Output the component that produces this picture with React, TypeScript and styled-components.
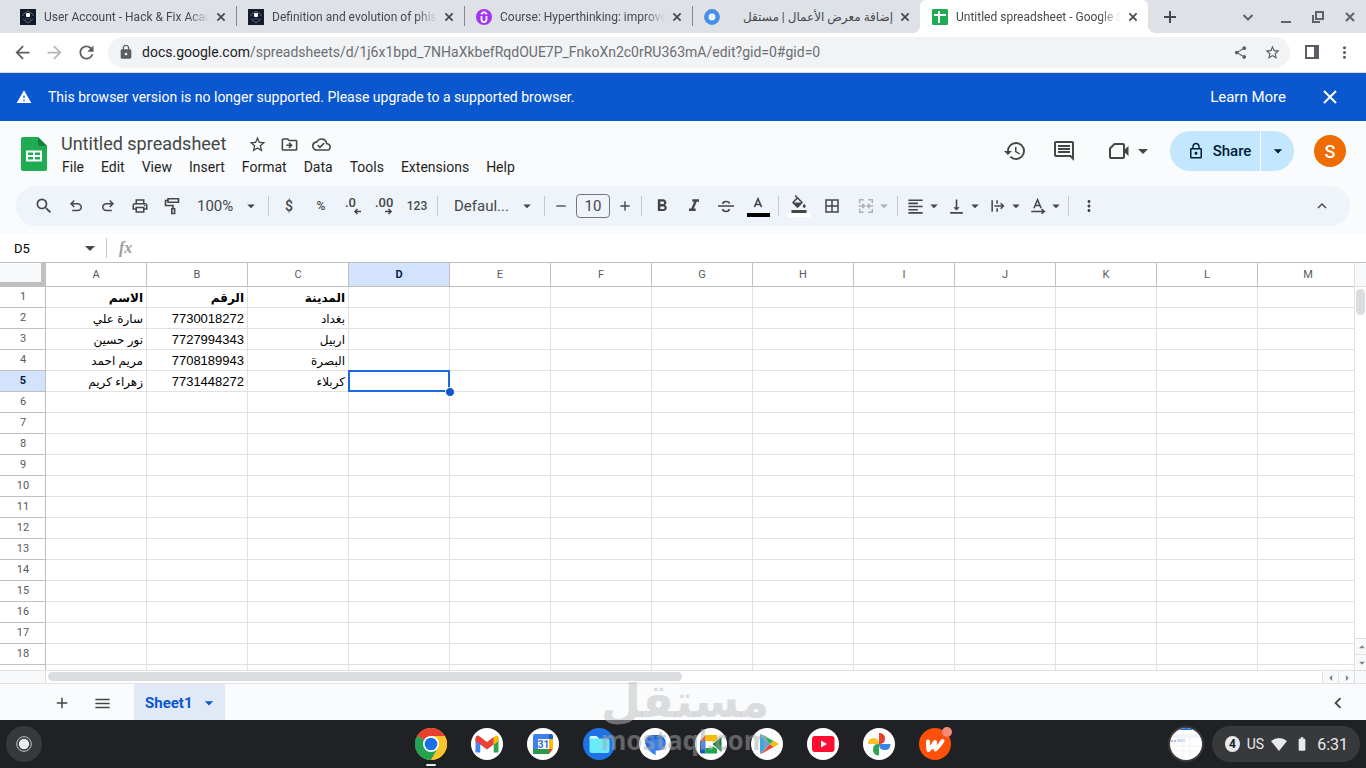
import React from "react";
import styled, { createGlobalStyle, css } from "styled-components";
import {
  MdAdd,
  MdArrowBack,
  MdArrowDropDown,
  MdArrowDropUp,
  MdArrowForward,
  MdArrowLeft,
  MdArrowRight,
  MdBatteryFull,
  MdBorderAll,
  MdChevronLeft,
  MdExpandLess,
  MdFormatAlignLeft,
  MdFormatBold,
  MdFormatColorFill,
  MdFormatItalic,
  MdHistory,
  MdLock,
  MdLockOutline,
  MdMenu,
  MdMoreVert,
  MdOutlineCloudDone,
  MdOutlineComment,
  MdOutlineDriveFileMove,
  MdOutlinePrint,
  MdRefresh,
  MdRemove,
  MdSearch,
  MdShare,
  MdStarBorder,
  MdVerticalAlignBottom,
  MdWarning,
} from "react-icons/md";

const GlobalStyle = createGlobalStyle`
  *, *::before, *::after { box-sizing: border-box; }
  body { margin: 0; font-family: Roboto, "DejaVu Sans", sans-serif; background: #fff; }
  button, input, select { font: inherit; color: inherit; margin: 0; padding: 0; border: 0; background: none; }
  button { cursor: pointer; }
  svg { display: block; flex: none; }
`;

const Screen = styled.div`
  position: relative;
  display: flex;
  flex-direction: column;
  height: 100vh;
  overflow: hidden;
`;

/* Browser chrome */

const TabStrip = styled.div`
  display: flex;
  flex: none;
  height: 33px;
  padding-left: 8px;
  background: #dee1e6;
  color: #45494d;
`;

const Tab = styled.div<{ $active?: boolean; $divided?: boolean }>`
  position: relative;
  display: flex;
  align-items: center;
  flex: 0 1 228px;
  min-width: 0;
  gap: 8px;
  padding: 0 7px 0 12px;
  font-size: 12px;
  ${(p) =>
    p.$divided &&
    css`
      &::after {
        content: "";
        position: absolute;
        right: -1px;
        top: 6px;
        width: 1px;
        height: 20px;
        background: #85898d;
      }
    `}
  ${(p) =>
    p.$active &&
    css`
      background: #fff;
      border-radius: 6px 6px 0 0;
      &::before,
      &::after {
        content: "";
        position: absolute;
        bottom: 0;
        width: 8px;
        height: 8px;
      }
      &::before {
        right: 100%;
        background: radial-gradient(circle at 0 0, transparent 8px, #fff 8px);
      }
      &::after {
        left: 100%;
        background: radial-gradient(circle at 100% 0, transparent 8px, #fff 8px);
      }
    `}
`;

const TabTitle = styled.span<{ $fade?: boolean }>`
  flex: 1;
  min-width: 0;
  overflow: hidden;
  white-space: nowrap;
  line-height: 20px;
  ${(p) => p.$fade && "mask-image: linear-gradient(to right, #000 144px, transparent 165px);"}
`;

const TabClose = styled.button`
  display: flex;
  margin-left: -4px;
`;

const NewTab = styled.button`
  display: grid;
  place-items: center;
  width: 44px;
`;

const WindowControls = styled.div`
  display: flex;
  align-items: center;
  margin-left: auto;
  color: #5f6368;
`;

const WindowButton = styled.button<{ $w?: number }>`
  display: grid;
  place-items: center;
  width: ${(p) => p.$w ?? 32}px;
  height: 32px;
`;

const AddressRow = styled.div`
  display: flex;
  align-items: center;
  flex: none;
  height: 40px;
  padding: 0 6px 1px;
  border-bottom: 1px solid #dadce0;
  color: #5a5e62;
`;

const ChromeButton = styled.button<{ $faint?: boolean }>`
  display: grid;
  place-items: center;
  width: 32px;
  height: 32px;
  opacity: ${(p) => (p.$faint ? 0.45 : 1)};
`;

const Omnibox = styled.div`
  display: flex;
  align-items: center;
  flex: 1;
  min-width: 0;
  height: 31px;
  margin: 0 6px;
  padding: 0 2px 0 10px;
  border-radius: 16px;
  background: #f1f3f4;
`;

const Url = styled.div`
  flex: 1;
  min-width: 0;
  margin-left: 8px;
  overflow: hidden;
  white-space: nowrap;
  font-size: 14px;
  line-height: 20px;
  color: #6b6e72;
  b { font-weight: 400; color: #202124; }
`;

const Banner = styled.div`
  display: flex;
  align-items: center;
  flex: none;
  height: 48px;
  padding: 0 20px 0 16px;
  background: #0b57d0;
  color: #fff;
  font-size: 14px;
  p { flex: 1; margin: 0 0 0 16px; }
  a { color: inherit; font-size: 15px; text-decoration: none; }
  button { display: grid; place-items: center; width: 32px; height: 32px; margin-left: 28px; }
`;

/* Document header */

const AppShell = styled.div`
  flex: none;
  padding-bottom: 8px;
  background: #f9fbfd;
  color: #444746;
`;

const DocHeader = styled.header`
  display: flex;
  height: 65px;
  padding: 0 20px 0 21px;
`;

const DocLogo = styled.a`
  margin: 16px 7px 0 0;
`;

const DocNames = styled.div`
  display: flex;
  flex-direction: column;
  padding-top: 12px;
`;

const TitleRow = styled.div`
  display: flex;
  align-items: center;
  height: 23px;
  margin-left: 7px;
`;

const TitleInput = styled.input`
  width: 180px;
  height: 24px;
  padding-bottom: 2px;
  font-size: 18px;
`;

const IconButton = styled.button<{ $w?: number; $shift?: number }>`
  display: flex;
  align-items: center;
  justify-content: center;
  width: ${(p) => p.$w ?? 32}px;
  height: 24px;
  padding-left: ${(p) => p.$shift ?? 0}px;
`;

const MenuBar = styled.nav`
  display: flex;
  gap: 1px;
  height: 22px;
  font-size: 14px;
  color: #1f1f1f;
  button { padding: 0 8px; }
`;

const DocActions = styled.div`
  display: flex;
  align-items: center;
  height: 40px;
  margin: 10px 0 0 auto;
`;

const ShareGroup = styled.div`
  display: flex;
  height: 40px;
  margin: 0 20px 0 14px;
  border-radius: 20px;
  overflow: hidden;
  background: #c2e7ff;
  color: #001d35;
  font-size: 15px;
  font-weight: 500;
  button { display: flex; align-items: center; justify-content: center; gap: 8px; }
  button:first-child { width: 91px; padding-left: 8px; border-right: 1px solid #fff; }
  button:last-child { width: 33px; }
`;

const Avatar = styled.button`
  width: 32px;
  height: 32px;
  border-radius: 50%;
  background: #ef6c00;
  color: #fff;
  font-size: 18px;
  font-weight: 500;
`;

/* Formatting toolbar */

const Toolbar = styled.div`
  display: flex;
  align-items: center;
  height: 40px;
  margin: 0 16px;
  padding: 0 12px 0 11px;
  border-radius: 20px;
  background: #eff3fa;
  font-size: 14px;
`;

const Tool = styled.button<{ $w?: number; $shift?: number; $disabled?: boolean; $push?: boolean }>`
  display: flex;
  align-items: center;
  justify-content: center;
  flex: none;
  width: ${(p) => p.$w ?? 32}px;
  height: 28px;
  margin-left: ${(p) => (p.$push ? "auto" : 0)};
  padding-left: ${(p) => p.$shift ?? 0}px;
  font-weight: 500;
  opacity: ${(p) => (p.$disabled ? 0.38 : 1)};
`;

const SmallLabel = styled.span`
  font-size: 12px;
`;

const Separator = styled.span`
  flex: none;
  width: 1px;
  height: 20px;
  margin: 0 4px;
  background: #c7c7c7;
`;

const SelectBox = styled.label<{ $w: number; $inset: number }>`
  display: grid;
  grid-template-columns: 1fr 22px;
  align-items: center;
  flex: none;
  width: ${(p) => p.$w}px;
  padding-left: ${(p) => p.$inset}px;
  select {
    grid-area: 1 / 1 / 2 / 3;
    width: 100%;
    height: 24px;
    appearance: none;
    outline: 0;
    font-size: 15px;
  }
  svg { grid-area: 1 / 2; pointer-events: none; }
`;

const SizeInput = styled.input`
  flex: none;
  width: 34px;
  height: 24px;
  margin: 0 3px;
  border: 1px solid #747775;
  border-radius: 4px;
  text-align: center;
  font-size: 15px;
`;

const ColorTool = styled(Tool)<{ $bar: string }>`
  flex-direction: column;
  &::after {
    content: "";
    width: 23px;
    height: 4px;
    background: ${(p) => p.$bar};
  }
`;

/* Formula bar */

const FormulaBar = styled.div`
  display: flex;
  align-items: center;
  flex: none;
  height: 29px;
  padding: 0 8px 0 14px;
  border-bottom: 1px solid #c0c0c0;
  color: #444746;
`;

const NameBox = styled.input`
  width: 64px;
  height: 20px;
  font-size: 13px;
  color: #000;
`;

const FxMark = styled.span`
  width: 20px;
  margin-left: 8px;
  font: italic 700 16px/20px "Liberation Serif", serif;
  color: #9a9ea3;
`;

const FormulaInput = styled.input`
  flex: 1;
  height: 20px;
`;

/* Grid */

const GridRow = styled.div`
  display: flex;
  flex: 1;
  min-height: 0;
`;

const GridView = styled.div`
  flex: 1;
  min-width: 0;
  overflow: hidden;
`;

const Sheet = styled.table`
  width: max-content;
  table-layout: fixed;
  border-collapse: separate;
  border-spacing: 0;
  th, td { padding: 0; }
`;

const CornerCell = styled.th`
  width: 46px;
  height: 24px;
  border: solid #c0c0c0;
  border-width: 0 5px 5px 0;
  background: #f8f9fa;
`;

const headCell = css<{ $on?: boolean }>`
  border: solid #c0c0c0;
  border-width: 0 1px 1px 0;
  font-size: 11px;
  line-height: 14px;
  font-weight: ${(p) => (p.$on ? 700 : 400)};
  color: ${(p) => (p.$on ? "#041e49" : "#575a5a")};
  background: ${(p) => (p.$on ? "#d3e3fd" : "#fff")};
`;

const ColumnHead = styled.th<{ $on?: boolean }>`
  ${headCell}
  width: 101px;
  height: 24px;
`;

const RowHead = styled.th<{ $on?: boolean }>`
  ${headCell}
  width: 46px;
  height: 21px;
  text-indent: 1px;
`;

const Cell = styled.td<{ $bold?: boolean; $arabic?: boolean }>`
  position: relative;
  height: 21px;
  border: solid #e1e1e1;
  border-width: 0 1px 1px 0;
  font-family: "Liberation Sans", "DejaVu Sans", sans-serif;
  font-size: ${(p) => (p.$arabic ? 12 : 13)}px;
  font-weight: ${(p) => (p.$bold ? 700 : 400)};
  line-height: 16px;
  text-align: right;
  white-space: nowrap;
  color: #000;
  span { display: block; height: 18px; padding: 2px 3px 0 0; }
`;

const Selection = styled.i`
  position: absolute;
  z-index: 1;
  inset: -1px -1px -1px -1px;
  border: 2px solid #1a6be0;
  &::after {
    content: "";
    position: absolute;
    right: -7px;
    bottom: -7px;
    width: 10px;
    height: 10px;
    border: 1px solid #fff;
    border-radius: 50%;
    background: #0b57d0;
  }
`;

const VerticalTrack = styled.div`
  display: flex;
  flex-direction: column;
  width: 12px;
  border-left: 1px solid #e1e1e1;
  background: #fff;
`;

const TrackHead = styled.div`
  height: 24px;
  border-bottom: 1px solid #e1e1e1;
  background: #f8f9fa;
`;

const Thumb = styled.div<{ $vertical?: boolean }>`
  border-radius: 5px;
  background: #dadce0;
  ${(p) => (p.$vertical ? "height: 26px; margin: 2px 1px auto;" : "width: 46.4%; height: 9px; margin: 0 auto 2px 2px;")}
`;

const Stepper = styled.button<{ $vertical?: boolean }>`
  display: grid;
  place-items: center;
  flex: none;
  overflow: hidden;
  background: #f8f9fa;
  color: #80868b;
  ${(p) =>
    p.$vertical
      ? "width: 11px; height: 16px; border-top: 1px solid #e1e1e1;"
      : "width: 16px; height: 12px; border-left: 1px solid #e1e1e1;"}
`;

const HorizontalTrack = styled.div`
  display: flex;
  align-items: center;
  flex: none;
  height: 14px;
  border: solid #e1e1e1;
  border-width: 1px 0;
`;

const TrackCorner = styled.div<{ $w: number; $end?: boolean }>`
  width: ${(p) => p.$w}px;
  height: 12px;
  border: solid #dadce0;
  border-width: ${(p) => (p.$end ? "0 0 0 1px" : "0 1px 0 0")};
  background: #f8f9fa;
`;

const SheetBar = styled.div`
  display: flex;
  align-items: center;
  flex: none;
  height: 36px;
  padding: 0 8px 0 42px;
  background: #f9fbfd;
  color: #444746;
`;

const BarButton = styled.button`
  display: grid;
  place-items: center;
  width: 40px;
  height: 36px;
  padding-top: 2px;
`;

const SheetTab = styled.button`
  display: flex;
  align-items: center;
  justify-content: space-between;
  width: 91px;
  height: 36px;
  margin: 0 auto 0 12px;
  padding: 2px 6px 0 11px;
  background: #e1e9f7;
  color: #0b57d0;
  font-size: 15px;
  font-weight: 700;
`;

/* Shelf */

const Shelf = styled.footer`
  display: grid;
  grid-template-columns: 1fr auto 1fr;
  align-items: center;
  flex: none;
  height: 48px;
  padding: 0 6px;
  background: #202124;
`;

const Launcher = styled.button`
  display: grid;
  place-items: center;
  width: 36px;
  height: 36px;
  border-radius: 50%;
  background: #38393b;
`;

const AppRow = styled.div`
  display: flex;
  gap: 24px;
`;

const AppButton = styled.button<{ $running?: boolean }>`
  position: relative;
  width: 32px;
  height: 32px;
  ${(p) =>
    p.$running &&
    css`
      &::after {
        content: "";
        position: absolute;
        left: 11px;
        top: 36px;
        width: 10px;
        height: 2px;
        border-radius: 1px;
        background: #e8eaed;
      }
    `}
`;

const Tray = styled.div`
  display: flex;
  align-items: center;
  justify-content: flex-end;
  gap: 8px;
`;

const Holding = styled.button`
  width: 36px;
  height: 36px;
`;

const StatusPill = styled.button`
  display: flex;
  align-items: center;
  gap: 7px;
  width: 148px;
  height: 36px;
  padding: 0 12px 0 13px;
  border-radius: 18px;
  background: #38393b;
  color: #e8eaed;
  font-size: 14px;
  b { width: 16px; height: 16px; border-radius: 50%; background: #e8eaed; color: #202124; font-size: 12px; line-height: 16px; }
  time { font-size: 16px; }
`;

const Watermark = styled.div`
  position: absolute;
  left: 50%;
  bottom: 14px;
  width: 164px;
  margin-left: -82px;
  text-align: center;
  color: rgba(165, 165, 165, 0.5);
  font: 700 26px/28px "Noto Sans", sans-serif;
  pointer-events: none;
  strong { display: block; font: 700 46px/50px "DejaVu Sans", sans-serif; color: rgba(190, 190, 190, 0.5); }
`;

/* Icons */

const Caret = ({ size = 18 }: { size?: number }) => <MdArrowDropDown size={size} />;

const Symbol = ({ d, size = 18 }: { d: string; size?: number }) => (
  <svg width={size} height={size} viewBox="0 -960 960 960" fill="currentColor">
    <path d={d} />
  </svg>
);

const Line = ({ d, size = 20, w = 2 }: { d: string; size?: number; w?: number }) => (
  <svg width={size} height={size} viewBox="0 0 20 20" fill="none" stroke="currentColor" strokeWidth={w}>
    <path d={d} />
  </svg>
);

const UNDO =
  "M280-200v-80h284q63 0 109.5-40T720-420q0-60-46.5-100T564-560H312l104 104-56 56-200-200 200-200 56 56-104 104h252q97 0 163.5 63T800-420q0 94-66.5 157T564-200H280Z";
const REDO =
  "M396-200q-97 0-163.5-63T160-420q0-94 66.5-157T396-640h252L544-744l56-56 200 200-200 200-56-56 104-104H396q-63 0-109.5 40T240-420q0 60 46.5 100T396-280h284v80H396Z";

const AcademyIcon = () => (
  <svg width="16" height="16" viewBox="0 0 16 16">
    <rect width="16" height="16" fill="#111c30" />
    <path d="M3 5.500 8 2l5 3.500M3 10l5 4 5-4M3 5.500V7M13 5.500V7" fill="none" stroke="#6b6258" strokeWidth="1" />
    <rect x="6" y="4" width="4" height="4" rx="1" fill="#fff" />
    <path d="M5 10h6" stroke="#39445a" />
  </svg>
);

const CourseIcon = () => (
  <svg width="16" height="16" viewBox="0 0 16 16">
    <circle cx="8" cy="8" r="8" fill="#a435f0" />
    <path d="M5.500 7v3.500a2.500 2.500 0 0 0 5 0V7M5 5l3-2 3 2" fill="none" stroke="#fff" strokeWidth="1.800" />
  </svg>
);

const RingIcon = () => (
  <svg width="16" height="16" viewBox="0 0 16 16">
    <circle cx="8" cy="8" r="5.700" fill="#e6f1fc" stroke="#458fe6" strokeWidth="4.500" />
  </svg>
);

const SheetsFavicon = () => (
  <svg width="16" height="16" viewBox="0 0 16 16">
    <rect width="16" height="16" rx="1" fill="#1fab51" />
    <path d="M2 6h12M7 2v12" stroke="#fff" strokeWidth="2" />
  </svg>
);

const SheetsLogo = () => (
  <svg width="26" height="34" viewBox="0 0 26 34">
    <path d="M2 0h15l9 9v23a2 2 0 0 1-2 2H2a2 2 0 0 1-2-2V2a2 2 0 0 1 2-2z" fill="#1fab51" />
    <path d="M17 0l9 9h-7a2 2 0 0 1-2-2z" fill="#14803b" />
    <path d="M6 14.500h14v9H6zM13 14v10M6 19h14" fill="none" stroke="#fff" strokeWidth="2" />
  </svg>
);

const MeetGlyph = () => (
  <svg width="24" height="24" viewBox="0 0 24 24" fill="none" stroke="currentColor" strokeWidth="2">
    <path d="M7.500 5H16a1 1 0 0 1 1 1v12a1 1 0 0 1-1 1H4a1 1 0 0 1-1-1V9.500z" />
    <path d="M17 11l4.500-4v10L17 13z" fill="currentColor" stroke="none" />
  </svg>
);

const PaintRoller = () => (
  <svg width="18" height="18" viewBox="0 0 18 18" fill="none" stroke="currentColor" strokeWidth="1.600">
    <path d="M5 1.800h10.500v3.500H5zM5 3.500H2.500V8.500H10v3M8.800 11.800h2.800v4.700H8.800z" />
  </svg>
);

const Decimals = ({ text, right }: { text: string; right?: boolean }) => (
  <svg width="22" height="20" viewBox="0 0 22 20" fill="currentColor">
    <text x={right ? 1 : 3} y="11" fontFamily="Roboto" fontSize="13" fontWeight="500">
      {text}
    </text>
    <path
      d={right ? "M11 15.500h6M14.500 13 17 15.500l-2.500 2.500" : "M13 15.500h6M15.500 13 13 15.500l2.500 2.500"}
      fill="none"
      stroke="currentColor"
      strokeWidth="1.600"
    />
  </svg>
);

const Disc = ({ fill = "#fff", children }: { fill?: string; children?: React.ReactNode }) => (
  <svg width="32" height="32" viewBox="0 0 32 32">
    <circle cx="16" cy="16" r="16" fill={fill} />
    {children}
  </svg>
);

const apps: { name: string; running?: boolean; icon: React.ReactNode }[] = [
  {
    name: "Chrome",
    running: true,
    icon: (
      <Disc fill="#fbc02d">
        <path d="M16 16 2.140 8A16 16 0 0 1 29.860 8z" fill="#e8402f" />
        <path d="M2.140 8A16 16 0 0 0 16 32l7-12-7-4z" fill="#21a352" />
        <path d="M16 32a16 16 0 0 0 13.860-24H16l7 12z" fill="#fac52c" />
        <circle cx="16" cy="16" r="8" fill="#fff" />
        <circle cx="16" cy="16" r="6.300" fill="#1a6fe3" />
      </Disc>
    ),
  },
  {
    name: "Gmail",
    icon: (
      <Disc>
        <path d="M4.500 10v14.500h4.800V13z" fill="#4285f4" />
        <path d="M27.500 10v14.500h-4.800V13z" fill="#2da34f" />
        <path d="M22.700 9.500l2.300-2q2.500-.5 2.500 2.500v3l-4.800 4z" fill="#fbbc04" />
        <path d="M4.500 13v-3q0-3 3-2.500L16 14l6.700-5v7.500L16 21.500z" fill="#ea4335" />
      </Disc>
    ),
  },
  {
    name: "Calendar",
    icon: (
      <Disc>
        <path d="M6 8q0-2 2-2h14v20H6z" fill="#3f80ec" />
        <path d="M22 6h2q2 0 2 2v3h-4z" fill="#1b5fc9" />
        <path d="M22 11h4v10h-4z" fill="#fbbc04" />
        <path d="M22 21h4l-4 5z" fill="#ea4335" />
        <path d="M6 21h16v5H8q-2 0-2-2z" fill="#2a9a48" />
        <path d="M11 11h11v10H11z" fill="#fff" />
        <text x="16.500" y="20" textAnchor="middle" fontFamily="Roboto" fontWeight="700" fontSize="10" fill="#2a70e0">
          31
        </text>
      </Disc>
    ),
  },
  {
    name: "Files",
    icon: (
      <Disc fill="#1f72e5">
        <path d="M6.500 10q0-2 2-2h5l2.500 2.500h8.500q2 0 2 2V23q0 2-2 2h-16q-2 0-2-2z" fill="#6beaf8" />
        <path d="M6.500 10q0-2 2-2h5l2.500 2.500H6.500z" fill="#d9fbff" />
      </Disc>
    ),
  },
  {
    name: "Messages",
    icon: (
      <Disc>
        <path d="M13 7h6a7.500 7.500 0 0 1 0 15.500h-2.500V27q-8-4-10.500-12A7 7 0 0 1 13 7z" fill="#1a66d9" />
        <path d="M12 11h9a5.500 5.500 0 0 1 0 11h-4.500v5Q12 24.500 9 20z" fill="#4b91f2" opacity="0.600" />
      </Disc>
    ),
  },
  {
    name: "Meet",
    icon: (
      <Disc>
        <path d="M5 13h5.500v7H5z" fill="#2a72e8" />
        <path d="M10.500 7v6H5z" fill="#ea4335" />
        <path d="M10.500 7H22v4.500l-4.500 3V13h-7z" fill="#fbbc04" />
        <path d="M5 20h5.500v5.500H6.500Q5 25.500 5 24z" fill="#1558c8" />
        <path d="M10.500 20h7v-2l4.500 3v4.500H10.500z" fill="#1ea54c" />
        <path d="M17.500 16l9-7v15z" fill="#128038" />
      </Disc>
    ),
  },
  {
    name: "Play Store",
    icon: (
      <Disc>
        <path d="M9 6v20l10-10z" fill="#3fa3ee" />
        <path d="M9 5.500l13.500 7.500L19 16z" fill="#28b05c" />
        <path d="M9 26.500L22.500 19 19 16z" fill="#ea4335" />
        <path d="M22.500 12.800L28 16l-5.500 3.200L19 16z" fill="#fbbc04" />
      </Disc>
    ),
  },
  {
    name: "YouTube",
    icon: (
      <Disc>
        <rect x="5" y="8" width="22.500" height="16" rx="3" fill="#fb0e32" />
        <path d="M14 12.500v7l6-3.500z" fill="#fff" />
      </Disc>
    ),
  },
  {
    name: "Photos",
    icon: (
      <Disc>
        <path d="M16 16V5q6 0 6 5.500T16 16z" fill="#e8402f" />
        <path d="M16 16h11.500q0 6-5.800 6T16 16z" fill="#3f82ea" />
        <path d="M16 16v11.500q-6 0-6-6T16 16z" fill="#2da652" />
        <path d="M16 16H5q0-6 5.500-6T16 16z" fill="#fac02a" />
      </Disc>
    ),
  },
  {
    name: "Wattpad",
    icon: (
      <svg width="32" height="32" viewBox="0 0 32 32" overflow="visible">
        <circle cx="16" cy="16" r="16" fill="#fd500b" />
        <path
          d="M9 13.500q0 5 .5 8.500 4-3 6.500-8-.5 4 .5 7.500 3.500-3 7-8.500"
          fill="none"
          stroke="#fff"
          strokeWidth="4"
          strokeLinecap="round"
          strokeLinejoin="round"
        />
        <circle cx="28" cy="4" r="5" fill="#f48d78" />
      </svg>
    ),
  },
];

/* Data */

const columns = "ABCDEFGHIJKLM".split("");

const rows: string[][] = [
  ["الاسم", "الرقم", "المدينة"],
  ["سارة علي", "7730018272", "بغداد"],
  ["نور حسين", "7727994343", "اربيل"],
  ["مريم احمد", "7708189943", "البصرة"],
  ["زهراء كريم", "7731448272", "كربلاء"],
];

const isArabic = (text?: string) => /[\u0600-\u06ff]/.test(text ?? "");

const rowLabels = [...Array.from({ length: 18 }, (_, i) => String(i + 1)), ""];

const tabs = [
  { title: "User Account - Hack & Fix Academy", icon: <AcademyIcon />, divided: true },
  { title: "Definition and evolution of phishing", icon: <AcademyIcon />, divided: true },
  { title: "Course: Hyperthinking: improve your", icon: <CourseIcon />, divided: true },
  { title: "إضافة معرض الأعمال | مستقل", icon: <RingIcon />, rtl: true },
  { title: "Untitled spreadsheet - Google Sheets", icon: <SheetsFavicon />, active: true },
];

const menus = ["File", "Edit", "View", "Insert", "Format", "Data", "Tools", "Extensions", "Help"];

function BrowserChrome() {
  return (
    <>
      <TabStrip role="tablist">
        {tabs.map((t) => (
          <Tab key={t.title} role="tab" aria-selected={!!t.active} $active={t.active} $divided={t.divided}>
            {t.icon}
            <TabTitle $fade={!t.rtl} dir={t.rtl ? "rtl" : "ltr"}>
              {t.title}
            </TabTitle>
            <TabClose aria-label="Close tab">
              <Line d="M5.500 5.500l9 9M14.500 5.500l-9 9" w={2.2} size={16} />
            </TabClose>
          </Tab>
        ))}
        <NewTab aria-label="New tab">
          <Line d="M10 4v12M4 10h12" />
        </NewTab>
        <WindowControls>
          <WindowButton $w={44} aria-label="Search tabs">
            <Line d="M5.500 8l4.500 4.500L14.500 8" />
          </WindowButton>
          <WindowButton aria-label="Minimize">
            <Line d="M5 15h10" />
          </WindowButton>
          <WindowButton aria-label="Restore">
            <Line d="M8 5h7v7H8zM5 8v7h7" />
          </WindowButton>
          <WindowButton aria-label="Close window">
            <Line d="M6 6l8 8M14 6l-8 8" />
          </WindowButton>
        </WindowControls>
      </TabStrip>
      <AddressRow>
        <ChromeButton aria-label="Back">
          <MdArrowBack size={21} />
        </ChromeButton>
        <ChromeButton aria-label="Forward" $faint>
          <MdArrowForward size={21} />
        </ChromeButton>
        <ChromeButton aria-label="Reload">
          <MdRefresh size={21} />
        </ChromeButton>
        <Omnibox>
          <MdLock size={16} />
          <Url role="textbox" tabIndex={0} aria-label="Address">
            <b>docs.google.com</b>/spreadsheets/d/1j6x1bpd_7NHaXkbefRqdOUE7P_FnkoXn2c0rRU363mA/edit?gid=0#gid=0
          </Url>
          <ChromeButton aria-label="Share page">
            <MdShare size={15} />
          </ChromeButton>
          <ChromeButton aria-label="Bookmark">
            <MdStarBorder size={17} />
          </ChromeButton>
        </Omnibox>
        <ChromeButton aria-label="Side panel">
          <svg width="14" height="14" viewBox="0 0 14 14">
            <path d="M1 1h12v12H1z" fill="none" stroke="currentColor" strokeWidth="2" />
            <path d="M9 0h5v14H9z" fill="currentColor" />
          </svg>
        </ChromeButton>
        <ChromeButton aria-label="Browser menu">
          <MdMoreVert size={19} />
        </ChromeButton>
      </AddressRow>
    </>
  );
}

function FormatToolbar() {
  return (
    <Toolbar role="toolbar">
      <Tool $w={33} aria-label="Search the menus"><MdSearch size={20} /></Tool>
      <Tool aria-label="Undo"><Symbol d={UNDO} /></Tool>
      <Tool aria-label="Redo"><Symbol d={REDO} /></Tool>
      <Tool aria-label="Print"><MdOutlinePrint size={18} /></Tool>
      <Tool aria-label="Paint format"><PaintRoller /></Tool>
      <SelectBox $w={76} $inset={9}>
        <select aria-label="Zoom"><option>100%</option></select>
        <Caret />
      </SelectBox>
      <Separator />
      <Tool aria-label="Format as currency">$</Tool>
      <Tool aria-label="Format as percent"><SmallLabel>%</SmallLabel></Tool>
      <Tool aria-label="Decrease decimal places"><Decimals text=".0" /></Tool>
      <Tool aria-label="Increase decimal places"><Decimals text=".00" right /></Tool>
      <Tool aria-label="More formats"><SmallLabel>123</SmallLabel></Tool>
      <Separator />
      <SelectBox $w={98} $inset={12}>
        <select aria-label="Font"><option>Defaul...</option></select>
        <Caret />
      </SelectBox>
      <Separator />
      <Tool $w={24} aria-label="Decrease font size"><MdRemove size={16} /></Tool>
      <SizeInput defaultValue="10" aria-label="Font size" />
      <Tool $w={24} aria-label="Increase font size"><MdAdd size={16} /></Tool>
      <Separator />
      <Tool aria-label="Bold"><MdFormatBold size={20} /></Tool>
      <Tool aria-label="Italic"><MdFormatItalic size={20} /></Tool>
      <Tool aria-label="Strikethrough">
        <Line d="M2 10h16M13.500 7.500Q13 5.500 10 5.500T6.700 7.800M6.700 13Q7 15.500 10 15.500T13.300 13" w={1.7} />
      </Tool>
      <ColorTool $bar="#000" aria-label="Text color">
        <Line d="M6 13.500 10 4l4 9.500M7.500 10.500h5" w={1.7} size={18} />
      </ColorTool>
      <Separator />
      <ColorTool $bar="#fff" aria-label="Fill color"><MdFormatColorFill size={18} /></ColorTool>
      <Tool $w={34} aria-label="Borders"><MdBorderAll size={18} /></Tool>
      <Tool $w={44} $shift={8} $disabled aria-label="Merge cells">
        <Line
          d="M7.500 3H3v4M12.500 3H17v4M7.500 17H3v-4M12.500 17H17v-4M2 10h6M6 7.500 8.500 10 6 12.500M18 10h-6M14 7.500 11.500 10 14 12.500"
          w={1.6}
          size={18}
        />
        <Caret />
      </Tool>
      <Separator />
      <Tool $w={41} $shift={4} aria-label="Horizontal align"><MdFormatAlignLeft size={19} /><Caret /></Tool>
      <Tool $w={41} $shift={4} aria-label="Vertical align"><MdVerticalAlignBottom size={19} /><Caret /></Tool>
      <Tool $w={41} $shift={4} aria-label="Text wrapping">
        <Line d="M3.500 3.500v13M9 3.500v4M9 12.500v4M6 10h10M13 7l3 3-3 3" w={1.7} size={18} />
        <Caret />
      </Tool>
      <Tool $w={39} $shift={4} aria-label="Text rotation">
        <Line d="M5.500 12.500 9.500 3l4 9.500M7 9.500h5M2.500 16H16M14 13.500l3 2.500-3 2.500" w={1.7} size={18} />
        <Caret />
      </Tool>
      <Separator />
      <Tool aria-label="More"><MdMoreVert size={18} /></Tool>
      <Tool $push aria-label="Hide the menus"><MdExpandLess size={18} /></Tool>
    </Toolbar>
  );
}

function Grid() {
  return (
    <>
      <GridRow>
        <GridView>
          <Sheet>
            <thead>
              <tr>
                <CornerCell />
                {columns.map((c) => (
                  <ColumnHead key={c} scope="col" $on={c === "D"}>{c}</ColumnHead>
                ))}
              </tr>
            </thead>
            <tbody>
              {rowLabels.map((label, r) => (
                <tr key={r}>
                  <RowHead scope="row" $on={label === "5"}>{label}</RowHead>
                  {columns.map((c, i) => (
                    <Cell key={c} $bold={r === 0} $arabic={isArabic(rows[r]?.[i])}>
                      {rows[r]?.[i] && <span>{rows[r][i]}</span>}
                      {r === 4 && c === "D" && <Selection />}
                    </Cell>
                  ))}
                </tr>
              ))}
            </tbody>
          </Sheet>
        </GridView>
        <VerticalTrack>
          <TrackHead />
          <Thumb $vertical />
          <Stepper $vertical aria-label="Scroll up"><MdArrowDropUp size={14} /></Stepper>
          <Stepper $vertical aria-label="Scroll down"><MdArrowDropDown size={14} /></Stepper>
        </VerticalTrack>
      </GridRow>
      <HorizontalTrack>
        <TrackCorner $w={46} />
        <Thumb />
        <Stepper aria-label="Scroll left"><MdArrowLeft size={14} /></Stepper>
        <Stepper aria-label="Scroll right"><MdArrowRight size={14} /></Stepper>
        <TrackCorner $w={12} $end />
      </HorizontalTrack>
    </>
  );
}

export default function App() {
  return (
    <Screen>
      <GlobalStyle />
      <BrowserChrome />
      <Banner role="alert">
        <MdWarning size={16} />
        <p>This browser version is no longer supported. Please upgrade to a supported browser.</p>
        <a href="#learn">Learn More</a>
        <button aria-label="Dismiss"><Line d="M4 4l12 12M16 4L4 16" w={2} /></button>
      </Banner>

      <AppShell>
        <DocHeader>
          <DocLogo href="#home" aria-label="Sheets home"><SheetsLogo /></DocLogo>
          <DocNames>
            <TitleRow>
              <TitleInput defaultValue="Untitled spreadsheet" aria-label="Document name" />
              <IconButton aria-label="Star"><MdStarBorder size={19} /></IconButton>
              <IconButton aria-label="Move"><MdOutlineDriveFileMove size={19} /></IconButton>
              <IconButton aria-label="Saved to Drive"><MdOutlineCloudDone size={19} /></IconButton>
            </TitleRow>
            <MenuBar>
              {menus.map((m) => (
                <button key={m}>{m}</button>
              ))}
            </MenuBar>
          </DocNames>
          <DocActions>
            <IconButton $w={49} aria-label="Version history"><MdHistory size={24} /></IconButton>
            <IconButton $w={49} aria-label="Comments"><MdOutlineComment size={24} /></IconButton>
            <IconButton $w={68} $shift={18} aria-label="Meet"><MeetGlyph /><Caret size={24} /></IconButton>
            <ShareGroup>
              <button><MdLockOutline size={18} />Share</button>
              <button aria-label="Share options"><Caret size={20} /></button>
            </ShareGroup>
            <Avatar aria-label="Account">S</Avatar>
          </DocActions>
        </DocHeader>
        <FormatToolbar />
      </AppShell>

      <FormulaBar>
        <NameBox defaultValue="D5" aria-label="Name box" />
        <Caret size={24} />
        <Separator />
        <FxMark aria-hidden="true">fx</FxMark>
        <FormulaInput aria-label="Formula" />
      </FormulaBar>

      <Grid />

      <SheetBar>
        <BarButton aria-label="Add sheet"><MdAdd size={18} /></BarButton>
        <BarButton aria-label="All sheets"><MdMenu size={19} /></BarButton>
        <SheetTab>Sheet1<Caret size={20} /></SheetTab>
        <BarButton aria-label="Show side panel"><MdChevronLeft size={22} /></BarButton>
      </SheetBar>

      <Shelf>
        <Launcher aria-label="Launcher">
          <svg width="16" height="16" viewBox="0 0 16 16">
            <circle cx="8" cy="8" r="7.300" fill="none" stroke="#c4c6c9" strokeWidth="1" />
            <circle cx="8" cy="8" r="5.200" fill="#eceef0" />
          </svg>
        </Launcher>
        <AppRow>
          {apps.map((a) => (
            <AppButton key={a.name} aria-label={a.name} $running={a.running}>{a.icon}</AppButton>
          ))}
        </AppRow>
        <Tray>
          <Holding aria-label="Recent screen capture">
            <svg width="36" height="36" viewBox="0 0 36 36">
              <circle cx="18" cy="18" r="18" fill="#38393b" />
              <circle cx="18" cy="18" r="16" fill="#fff" />
              <path d="M11 4q7-4 14 0z" fill="#1a66d9" />
              <path d="M6 9h24M5 11h26" stroke="#e4e8ef" />
              <path d="M9 13h8v3H9z" fill="#c9dbf5" />
              <path d="M3 20h30M5 25h26M15 12v20M22 12v20" stroke="#f0f2f5" fill="none" />
              <path d="M3 15h6" stroke="#77797c" strokeDasharray="2 1" />
            </svg>
          </Holding>
          <StatusPill aria-label="Status">
            <b>4</b>
            <span>US</span>
            <svg width="16" height="13" viewBox="0 0 16 13"><path d="M0 3q8-6 16 0L8 13z" fill="currentColor" /></svg>
            <MdBatteryFull size={16} />
            <time>6:31</time>
          </StatusPill>
        </Tray>
      </Shelf>

      <Watermark aria-hidden="true">
        <strong>مستقل</strong>
        mostaql.com
      </Watermark>
    </Screen>
  );
}
